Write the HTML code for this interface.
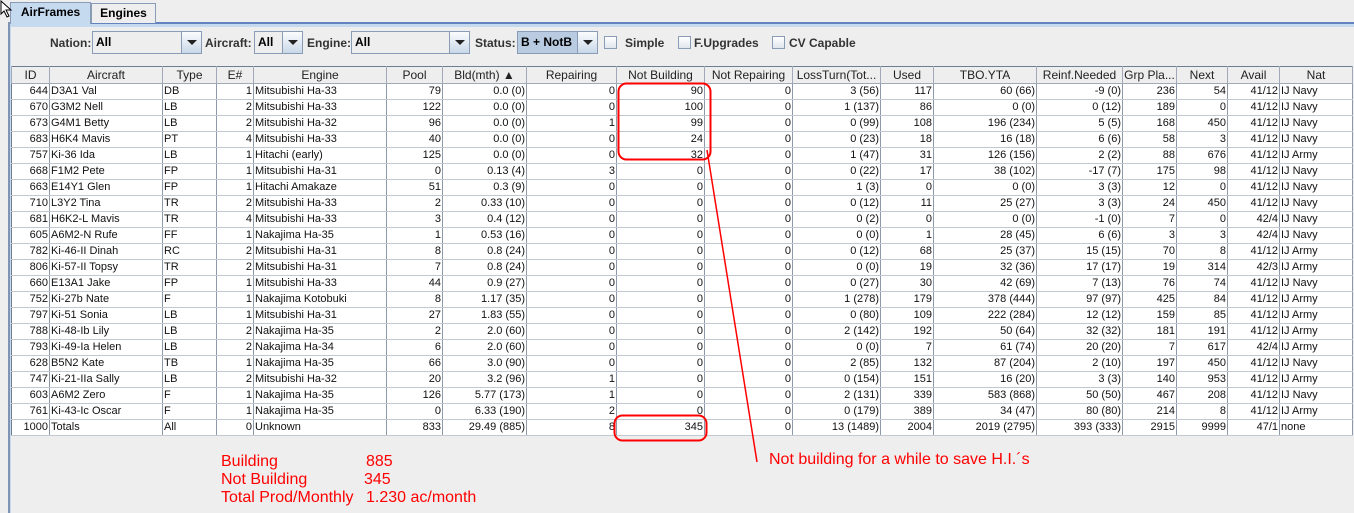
<!DOCTYPE html>
<html><head><meta charset="utf-8"><style>
*{box-sizing:border-box;margin:0;padding:0}
body{width:1354px;height:513px;background:#eeeeee;font-family:"Liberation Sans",Tahoma,sans-serif;position:relative;overflow:hidden}
.abs{position:absolute}
.tab{position:absolute;top:3px;height:20px;border:1px solid #8a9cb5;border-bottom:none;font-weight:bold;font-size:12px;line-height:18px;text-align:center;background:#eeeeee}
.lbl{position:absolute;top:36px;font-size:12px;font-weight:bold;color:#333}
.combo{position:absolute;top:31px;height:23px;border:1px solid #8a9cb5;background:#eeeeee;font-size:12px;font-weight:bold;line-height:21px;padding-left:3px}
.combo .btn{position:absolute;right:0;top:0;width:20px;height:21px;border-left:1px solid #8a9cb5;background:linear-gradient(#fafcfe,#c9d8e8)}
.combo .btn:after{content:"";position:absolute;left:5px;top:8px;border-left:5px solid transparent;border-right:5px solid transparent;border-top:5px solid #222}
.cb{position:absolute;top:36px;width:13px;height:13px;border:1px solid #8a9cb5;background:linear-gradient(#fff,#dfe6ee)}
table{position:absolute;left:11px;top:66px;width:1341px;border-collapse:collapse;table-layout:fixed;font-size:11px;background:#fff;border:1px solid #6e7d90}
th{height:17px;font-weight:normal;font-size:12px;background:#eeeeee;border:1px solid #a0aab8;border-top:none;white-space:nowrap;overflow:hidden;padding:0 1px;color:#222}
td{height:16px;border-right:1px solid #8e9aa8;border-bottom:1px solid #c2c8d0;text-align:right;white-space:nowrap;overflow:hidden;padding:0 1px;line-height:13px;color:#111}
td.l{text-align:left}
.red{position:absolute;color:#f00;font-size:16px;white-space:pre}
</style></head><body>
<div class="abs" style="left:8px;top:22px;width:1346px;height:2px;background:#6382bf"></div>
<div class="abs" style="left:8px;top:24px;width:1346px;height:3px;background:#c5d9ef"></div>
<div class="abs" style="left:8px;top:22px;width:2px;height:491px;background:#7f93b5"></div>
<div class="abs" style="left:10px;top:24px;width:1px;height:489px;background:#c5d9ef"></div>
<div class="tab" style="left:10px;width:81px;background:#c5d9ef;top:2px;height:22px">AirFrames</div>
<div class="tab" style="left:91px;width:65px">Engines</div>
<svg class="abs" style="left:0;top:0" width="16" height="20"><path d="M1 1 L1 14 L4 11 L7 17 L9 16 L6 10 L11 10 Z" fill="#fff" stroke="#000" stroke-width="1"/></svg>

<div class="lbl" style="left:50px">Nation:</div>
<div class="combo" style="left:92px;width:110px">All<div class="btn"></div></div>
<div class="lbl" style="left:205px">Aircraft:</div>
<div class="combo" style="left:254px;width:49px">All<div class="btn"></div></div>
<div class="lbl" style="left:307px">Engine:</div>
<div class="combo" style="left:351px;width:119px">All<div class="btn"></div></div>
<div class="lbl" style="left:475px">Status:</div>
<div class="combo" style="left:517px;width:81px;background:#b8cbe0">B + NotB<div class="btn"></div></div>
<div class="cb" style="left:604px"></div><div class="lbl" style="left:625px">Simple</div>
<div class="cb" style="left:678px"></div><div class="lbl" style="left:694px">F.Upgrades</div>
<div class="cb" style="left:772px"></div><div class="lbl" style="left:789px">CV Capable</div>

<table>
<colgroup><col style="width:38px"><col style="width:113px"><col style="width:54px"><col style="width:37px"><col style="width:133px"><col style="width:56px"><col style="width:84px"><col style="width:90px"><col style="width:88px"><col style="width:88px"><col style="width:88px"><col style="width:53px"><col style="width:103px"><col style="width:86px"><col style="width:54px"><col style="width:51px"><col style="width:52px"><col style="width:73px"></colgroup>
<tr><th>ID</th><th>Aircraft</th><th>Type</th><th>E#</th><th>Engine</th><th>Pool</th><th>Bld(mth) ▲</th><th>Repairing</th><th>Not Building</th><th>Not Repairing</th><th>LossTurn(Tot...</th><th>Used</th><th>TBO.YTA</th><th>Reinf.Needed</th><th>Grp Pla...</th><th>Next</th><th>Avail</th><th>Nat</th></tr>
<tr><td>644</td><td class="l">D3A1 Val</td><td class="l">DB</td><td>1</td><td class="l">Mitsubishi Ha-33</td><td>79</td><td>0.0 (0)</td><td>0</td><td>90</td><td>0</td><td>3 (56)</td><td>117</td><td>60 (66)</td><td>-9 (0)</td><td>236</td><td>54</td><td>41/12</td><td class="l">IJ Navy</td></tr>
<tr><td>670</td><td class="l">G3M2 Nell</td><td class="l">LB</td><td>2</td><td class="l">Mitsubishi Ha-33</td><td>122</td><td>0.0 (0)</td><td>0</td><td>100</td><td>0</td><td>1 (137)</td><td>86</td><td>0 (0)</td><td>0 (12)</td><td>189</td><td>0</td><td>41/12</td><td class="l">IJ Navy</td></tr>
<tr><td>673</td><td class="l">G4M1 Betty</td><td class="l">LB</td><td>2</td><td class="l">Mitsubishi Ha-32</td><td>96</td><td>0.0 (0)</td><td>1</td><td>99</td><td>0</td><td>0 (99)</td><td>108</td><td>196 (234)</td><td>5 (5)</td><td>168</td><td>450</td><td>41/12</td><td class="l">IJ Navy</td></tr>
<tr><td>683</td><td class="l">H6K4 Mavis</td><td class="l">PT</td><td>4</td><td class="l">Mitsubishi Ha-33</td><td>40</td><td>0.0 (0)</td><td>0</td><td>24</td><td>0</td><td>0 (23)</td><td>18</td><td>16 (18)</td><td>6 (6)</td><td>58</td><td>3</td><td>41/12</td><td class="l">IJ Navy</td></tr>
<tr><td>757</td><td class="l">Ki-36 Ida</td><td class="l">LB</td><td>1</td><td class="l">Hitachi (early)</td><td>125</td><td>0.0 (0)</td><td>0</td><td>32</td><td>0</td><td>1 (47)</td><td>31</td><td>126 (156)</td><td>2 (2)</td><td>88</td><td>676</td><td>41/12</td><td class="l">IJ Army</td></tr>
<tr><td>668</td><td class="l">F1M2 Pete</td><td class="l">FP</td><td>1</td><td class="l">Mitsubishi Ha-31</td><td>0</td><td>0.13 (4)</td><td>3</td><td>0</td><td>0</td><td>0 (22)</td><td>17</td><td>38 (102)</td><td>-17 (7)</td><td>175</td><td>98</td><td>41/12</td><td class="l">IJ Navy</td></tr>
<tr><td>663</td><td class="l">E14Y1 Glen</td><td class="l">FP</td><td>1</td><td class="l">Hitachi Amakaze</td><td>51</td><td>0.3 (9)</td><td>0</td><td>0</td><td>0</td><td>1 (3)</td><td>0</td><td>0 (0)</td><td>3 (3)</td><td>12</td><td>0</td><td>41/12</td><td class="l">IJ Navy</td></tr>
<tr><td>710</td><td class="l">L3Y2 Tina</td><td class="l">TR</td><td>2</td><td class="l">Mitsubishi Ha-33</td><td>2</td><td>0.33 (10)</td><td>0</td><td>0</td><td>0</td><td>0 (12)</td><td>11</td><td>25 (27)</td><td>3 (3)</td><td>24</td><td>450</td><td>41/12</td><td class="l">IJ Navy</td></tr>
<tr><td>681</td><td class="l">H6K2-L Mavis</td><td class="l">TR</td><td>4</td><td class="l">Mitsubishi Ha-33</td><td>3</td><td>0.4 (12)</td><td>0</td><td>0</td><td>0</td><td>0 (2)</td><td>0</td><td>0 (0)</td><td>-1 (0)</td><td>7</td><td>0</td><td>42/4</td><td class="l">IJ Navy</td></tr>
<tr><td>605</td><td class="l">A6M2-N Rufe</td><td class="l">FF</td><td>1</td><td class="l">Nakajima Ha-35</td><td>1</td><td>0.53 (16)</td><td>0</td><td>0</td><td>0</td><td>0 (0)</td><td>1</td><td>28 (45)</td><td>6 (6)</td><td>3</td><td>3</td><td>42/4</td><td class="l">IJ Navy</td></tr>
<tr><td>782</td><td class="l">Ki-46-II Dinah</td><td class="l">RC</td><td>2</td><td class="l">Mitsubishi Ha-31</td><td>8</td><td>0.8 (24)</td><td>0</td><td>0</td><td>0</td><td>0 (12)</td><td>68</td><td>25 (37)</td><td>15 (15)</td><td>70</td><td>8</td><td>41/12</td><td class="l">IJ Army</td></tr>
<tr><td>806</td><td class="l">Ki-57-II Topsy</td><td class="l">TR</td><td>2</td><td class="l">Mitsubishi Ha-31</td><td>7</td><td>0.8 (24)</td><td>0</td><td>0</td><td>0</td><td>0 (0)</td><td>19</td><td>32 (36)</td><td>17 (17)</td><td>19</td><td>314</td><td>42/3</td><td class="l">IJ Army</td></tr>
<tr><td>660</td><td class="l">E13A1 Jake</td><td class="l">FP</td><td>1</td><td class="l">Mitsubishi Ha-33</td><td>44</td><td>0.9 (27)</td><td>0</td><td>0</td><td>0</td><td>0 (27)</td><td>30</td><td>42 (69)</td><td>7 (13)</td><td>76</td><td>74</td><td>41/12</td><td class="l">IJ Navy</td></tr>
<tr><td>752</td><td class="l">Ki-27b Nate</td><td class="l">F</td><td>1</td><td class="l">Nakajima Kotobuki</td><td>8</td><td>1.17 (35)</td><td>0</td><td>0</td><td>0</td><td>1 (278)</td><td>179</td><td>378 (444)</td><td>97 (97)</td><td>425</td><td>84</td><td>41/12</td><td class="l">IJ Army</td></tr>
<tr><td>797</td><td class="l">Ki-51 Sonia</td><td class="l">LB</td><td>1</td><td class="l">Mitsubishi Ha-31</td><td>27</td><td>1.83 (55)</td><td>0</td><td>0</td><td>0</td><td>0 (80)</td><td>109</td><td>222 (284)</td><td>12 (12)</td><td>159</td><td>85</td><td>41/12</td><td class="l">IJ Army</td></tr>
<tr><td>788</td><td class="l">Ki-48-Ib Lily</td><td class="l">LB</td><td>2</td><td class="l">Nakajima Ha-35</td><td>2</td><td>2.0 (60)</td><td>0</td><td>0</td><td>0</td><td>2 (142)</td><td>192</td><td>50 (64)</td><td>32 (32)</td><td>181</td><td>191</td><td>41/12</td><td class="l">IJ Army</td></tr>
<tr><td>793</td><td class="l">Ki-49-Ia Helen</td><td class="l">LB</td><td>2</td><td class="l">Nakajima Ha-34</td><td>6</td><td>2.0 (60)</td><td>0</td><td>0</td><td>0</td><td>0 (0)</td><td>7</td><td>61 (74)</td><td>20 (20)</td><td>7</td><td>617</td><td>42/4</td><td class="l">IJ Army</td></tr>
<tr><td>628</td><td class="l">B5N2 Kate</td><td class="l">TB</td><td>1</td><td class="l">Nakajima Ha-35</td><td>66</td><td>3.0 (90)</td><td>0</td><td>0</td><td>0</td><td>2 (85)</td><td>132</td><td>87 (204)</td><td>2 (10)</td><td>197</td><td>450</td><td>41/12</td><td class="l">IJ Navy</td></tr>
<tr><td>747</td><td class="l">Ki-21-IIa Sally</td><td class="l">LB</td><td>2</td><td class="l">Mitsubishi Ha-32</td><td>20</td><td>3.2 (96)</td><td>1</td><td>0</td><td>0</td><td>0 (154)</td><td>151</td><td>16 (20)</td><td>3 (3)</td><td>140</td><td>953</td><td>41/12</td><td class="l">IJ Army</td></tr>
<tr><td>603</td><td class="l">A6M2 Zero</td><td class="l">F</td><td>1</td><td class="l">Nakajima Ha-35</td><td>126</td><td>5.77 (173)</td><td>1</td><td>0</td><td>0</td><td>2 (131)</td><td>339</td><td>583 (868)</td><td>50 (50)</td><td>467</td><td>208</td><td>41/12</td><td class="l">IJ Navy</td></tr>
<tr><td>761</td><td class="l">Ki-43-Ic Oscar</td><td class="l">F</td><td>1</td><td class="l">Nakajima Ha-35</td><td>0</td><td>6.33 (190)</td><td>2</td><td>0</td><td>0</td><td>0 (179)</td><td>389</td><td>34 (47)</td><td>80 (80)</td><td>214</td><td>8</td><td>41/12</td><td class="l">IJ Army</td></tr>
<tr><td>1000</td><td class="l">Totals</td><td class="l">All</td><td>0</td><td class="l">Unknown</td><td>833</td><td>29.49 (885)</td><td>8</td><td>345</td><td>0</td><td>13 (1489)</td><td>2004</td><td>2019 (2795)</td><td>393 (333)</td><td>2915</td><td>9999</td><td>47/1</td><td class="l">none</td></tr>
</table>

<svg class="abs" style="left:0;top:0" width="1354" height="513">
<rect x="618.5" y="83.5" width="92" height="76" rx="8" fill="none" stroke="#f00" stroke-width="2"/>
<rect x="614.5" y="415.5" width="92" height="25" rx="8" fill="none" stroke="#f00" stroke-width="2"/>
<line x1="707" y1="150" x2="757" y2="462" stroke="#f00" stroke-width="1.5"/>
</svg>
<div class="red" style="left:769px;top:451px">Not building for a while to save H.I.´s</div>
<div class="red" style="left:221px;top:453px">Building</div><div class="red" style="left:366px;top:453px">885</div>
<div class="red" style="left:221px;top:471px">Not Building</div><div class="red" style="left:364px;top:471px">345</div>
<div class="red" style="left:221px;top:489px">Total Prod/Monthly</div><div class="red" style="left:366px;top:489px">1.230 ac/month</div>
</body></html>
